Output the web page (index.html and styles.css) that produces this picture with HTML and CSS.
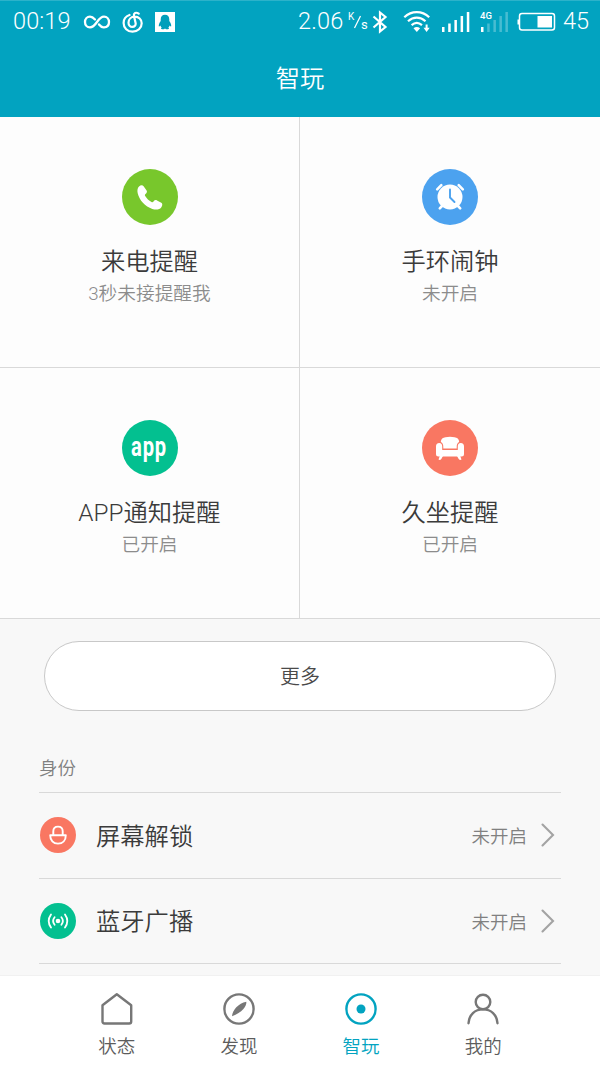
FILE: index.html
```html
<!DOCTYPE html>
<html lang="zh-CN">
<head>
<meta charset="utf-8">
<title>智玩</title>
<link rel="stylesheet" href="styles.css">
</head>
<body>
<div class="screen">
  <header class="header">
    <div class="status">
      <span class="time">00:19</span>
      <svg class="infinity" width="28" height="16" viewBox="0 0 28 16" fill="none" stroke="#fff" stroke-width="2.3" stroke-linecap="round"><path d="M16 10.500C18 13 19.500 13.600 21 13.400C24 13.200 26 11 26 8C26 5 24 2.600 21 2.600C14.500 2.600 13.500 13.400 7 13.400C4 13.400 2 11 2 8C2 5 4 2.600 7 2.600C9 2.600 10.500 3.800 12 5.500"/></svg>
      <svg class="music" width="22" height="22" viewBox="0 0 22 22" fill="none" stroke="#fff" stroke-width="2.200" stroke-linecap="round"><path d="M7.500 4C4 5.200 1.600 8.300 1.600 12C1.600 16.900 5.500 20.700 10.500 20.700C15.700 20.700 19.700 17 19.700 12.200C19.700 8.300 16.600 5.700 12.800 5.700C9 5.700 6.500 8.400 6.500 11.700C6.500 14.200 8.200 15.900 10.300 15.900C12.600 15.900 14 14.200 13.600 12L12 5C11.400 1.900 14 .8 16.700 2.700"/></svg>
      <svg class="penguin" width="20" height="20" viewBox="0 0 20 20"><rect width="20" height="20" fill="#fff"/><path fill="#009fbb" d="M10 2.800C7.200 2.800 5.700 4.700 5.700 7.500V9C4.200 11 3.500 13 3.900 14.500C4.500 14.500 5 14 5.400 13.500C5.700 14.600 6.200 15.200 6.700 15.700C5.500 16.200 5.900 17.200 7.200 17.200H9L10 16.600L11 17.200H12.800C14.100 17.200 14.500 16.200 13.300 15.700C13.900 15.200 14.300 14.600 14.600 13.500C15 14 15.500 14.500 16.100 14.500C16.500 13 15.800 11 14.300 9V7.500C14.300 4.700 12.800 2.800 10 2.800Z"/></svg>
      <span class="speed">2.06</span>
      <span class="unit"><span class="unit-k">K</span><svg width="9" height="14" viewBox="0 0 9 14"><path d="M1.500 13L7.500 1" stroke="#fff" stroke-width="1.200"/></svg><span class="unit-s">s</span></span>
      <svg class="bluetooth" width="16" height="24" viewBox="0 0 16 24" fill="none" stroke="#fff" stroke-width="2.200"><path d="M1.500 6.500L13.500 17L8 21.500V2.500L13.500 7L1.500 17.500"/></svg>
      <svg class="wifi" width="28" height="24" viewBox="0 0 28 24" fill="none" stroke="#fff" stroke-width="2.200"><path d="M1.300 7.200C8.500 .3 19 .3 26.200 7.200M5 11.300C10.300 6.500 17.200 6.500 22.500 11.300M8.600 15.200C12 12.300 15.600 12.300 19 15.200"/><path d="M10.500 18.200Q13.800 15.900 17.100 18.200L13.800 22Z" fill="#fff" stroke="none"/><path d="M23.600 14.500V20" stroke-width="2"/><path d="M20.500 17.700H26.700L23.600 22Z" fill="#fff" stroke="none"/></svg>
      <svg class="signal" width="28" height="22" viewBox="0 0 28 22" fill="#fff"><path d="M0 16h2.500v5H0zM6.200 12.500h2.500V21H6.200zM12.400 9h2.500v12h-2.500zM18.600 5h2.500v16h-2.500zM24.800 1h2.500v20h-2.500z"/></svg>
      <span class="mobile"><span class="network">4G</span><svg width="28" height="22" viewBox="0 0 28 22" fill="#fff"><path d="M1 16h2.500v5H1z"/><path opacity=".28" d="M7.200 12.500h2.500V21H7.200zM13.400 9h2.500v12h-2.500zM19.400 5h2.500v16h-2.500zM25.400 1h2.500v20h-2.500z"/></svg></span>
      <svg class="battery" width="39" height="20" viewBox="0 0 39 20"><rect x="2.500" y="1.500" width="35" height="16.500" rx="2.500" fill="none" stroke="#fff" stroke-width="1.500"/><path fill="#fff" d="M.5 7.500h2v5H.5zM20.500 4h14.500v11.500H20.500z"/></svg>
      <span class="percent">45</span>
    </div>
    <h1 class="title">智玩</h1>
  </header>

  <main class="content">
    <section class="features">
      <div class="feature">
        <svg class="badge" viewBox="0 0 56 56"><circle cx="28" cy="28" r="28" fill="#78c72c"/><path fill="#fff" d="M17 17.500C18.500 15.800 20.600 15.700 21.600 17.200L24.600 21.600C25.400 23 24.800 24 23.500 25C22.800 25.600 22.700 26.200 23.200 27.100C24.800 29.700 26.800 31.700 29.500 33C30.400 33.400 31 33.200 31.500 32.500C32.500 31.200 33.600 30.700 35 31.400L39.300 33.800C40.700 34.700 40.600 36.700 39.200 38.500C37.500 40.800 33.800 41 30.300 39.900C23.200 37.500 17.300 31.200 15.700 24.200C15.100 21.500 15.400 19 17 17.500Z"/></svg>
        <h2>来电提醒</h2><p>3秒未接提醒我</p>
      </div>
      <div class="feature">
        <svg class="badge" viewBox="0 0 56 56"><circle cx="28" cy="28" r="28" fill="#4ca2ef"/><circle cx="28" cy="28" r="12.500" fill="#fff"/><g fill="none" stroke="#fff" stroke-width="2.600" stroke-linecap="round"><path d="M15.200 20.300L19.300 16.200M36.700 16.200L40.800 20.300M20 37L17.800 39.300M36 37L38.200 39.300"/><path stroke="#4ca2ef" stroke-width="1.900" d="M28 20.500V28.500L32.500 33"/></g></svg>
        <h2>手环闹钟</h2><p>未开启</p>
      </div>
      <div class="feature">
        <span class="badge app-badge"><span>app</span></span>
        <h2>APP通知提醒</h2><p>已开启</p>
      </div>
      <div class="feature">
        <svg class="badge" viewBox="0 0 56 56"><circle cx="28" cy="28" r="28" fill="#f97762"/><g fill="#fff"><path d="M18.800 22C19 18.800 20.800 17.600 23.500 17.200Q28 16.500 32.500 17.200C35.200 17.600 37 18.800 37.200 22C35.300 23 34.700 24.500 34.700 27V28.500H21.300V27C21.300 24.500 20.700 23 18.800 22Z"/><path d="M17.300 23C19.300 23 20.200 24.400 20.200 26.500V30H35.800V26.500C35.800 24.400 36.700 23 38.700 23C41 23 42 24.500 42 26.500V34Q42 36.500 39.500 36.500H16.500Q14 36.500 14 34V26.500C14 24.500 15 23 17.300 23Z"/><path d="M17.800 36H21L19.300 39Q18 40.500 16.500 39.500ZM35 36H38.200L39.500 39.500Q38 40.500 36.700 39Z"/></g></svg>
        <h2>久坐提醒</h2><p>已开启</p>
      </div>
    </section>

    <div class="more">更多</div>

    <section class="identity">
      <h3>身份</h3>
      <div class="row">
        <svg class="row-icon" viewBox="0 0 36 36"><circle cx="18" cy="18" r="18" fill="#f97762"/><path d="M10.200 18.200H25.800C25.800 23.500 22.700 26.600 18 26.600S10.200 23.500 10.200 18.200ZM13.300 18V14.300C13.300 11.300 15 9.600 18 9.600S22.700 11.300 22.700 14.300V18" fill="none" stroke="#fff" stroke-width="1.900" stroke-linejoin="round"/></svg>
        <span class="row-name">屏幕解锁</span><span class="row-state">未开启</span>
        <svg class="chevron" width="14" height="24" viewBox="0 0 14 24"><path d="M1.500 1.500L12 12L1.500 22.500" fill="none" stroke="#a3a3a3" stroke-width="2.100" stroke-linecap="round"/></svg>
      </div>
      <div class="row">
        <svg class="row-icon" viewBox="0 0 36 36"><circle cx="18" cy="18" r="18" fill="#03c090"/><circle cx="18" cy="18" r="2.300" fill="#fff"/><path d="M14.600 14.200Q11.600 18 14.600 21.800M21.400 14.200Q24.400 18 21.400 21.800M11 11.500Q6.400 18 11 24.500M25 11.500Q29.600 18 25 24.500" fill="none" stroke="#fff" stroke-width="1.800" stroke-linecap="round"/></svg>
        <span class="row-name">蓝牙广播</span><span class="row-state">未开启</span>
        <svg class="chevron" width="14" height="24" viewBox="0 0 14 24"><path d="M1.500 1.500L12 12L1.500 22.500" fill="none" stroke="#a3a3a3" stroke-width="2.100" stroke-linecap="round"/></svg>
      </div>
    </section>
  </main>

  <nav class="tabs">
    <div class="tab"><svg viewBox="0 0 34 34"><path d="M2.500 13.300L16.800 2.200L31.200 13.300V29.500Q31.200 31.500 29.200 31.500H4.500Q2.500 31.500 2.500 29.500Z"/></svg><span>状态</span></div>
    <div class="tab"><svg viewBox="0 0 34 34"><circle cx="17" cy="17" r="14.600"/><path class="solid" d="M24.300 9.700C25 14 20 20.500 10 24.300C10.200 18.500 16.500 11 24.300 9.700Z"/></svg><span>发现</span></div>
    <div class="tab active"><svg viewBox="0 0 34 34"><circle cx="17" cy="17" r="14.600"/><circle class="solid" cx="17" cy="17" r="4.500"/></svg><span>智玩</span></div>
    <div class="tab"><svg viewBox="0 0 34 34"><circle cx="17" cy="10" r="7.300"/><path stroke-linecap="round" d="M2.500 31.300C3 22.500 9 17.400 17 17.400S31 22.500 31.500 31.300"/></svg><span>我的</span></div>
  </nav>
</div>
</body>
</html>
```

FILE: styles.css
```css
* { box-sizing: border-box; }
body { margin: 0; }
h1, h2, h3, p { margin: 0; font-weight: 350; }
svg { display: block; flex: none; }

.screen {
  width: 600px;
  height: 1066px;
  display: flex;
  flex-direction: column;
  overflow: hidden;
  background: #f8f8f8;
  font-family: Roboto, "Noto Sans CJK SC", sans-serif;
  font-weight: 350;
}

.header { height: 117px; flex: none; background: #02a3c0; color: #fff; border-top: 1px solid #2cb2ca; }
.status { height: 41px; display: flex; align-items: center; padding-left: 13px; white-space: nowrap; }
.time, .speed, .percent { font-size: 23.500px; line-height: 38px; padding-bottom: 2px; font-weight: 350; }
.time { width: 70px; letter-spacing: .1px; }
.music { margin-left: 11px; }
.penguin { margin-left: 11px; }
.speed { width: 50px; margin-left: 123px; letter-spacing: .2px; }
.unit { width: 18px; height: 20px; display: flex; align-items: center; font-size: 10px; line-height: 10px; font-weight: 400; }
.unit-k { align-self: flex-start; width: 6px; }
.unit svg { margin: 0 -1px; }
.unit-s { align-self: flex-end; font-size: 13px; line-height: 15px; }
.bluetooth { margin-left: 6px; }
.wifi { margin-left: 15px; }
.signal { margin-left: 11px; }
.mobile { display: grid; margin-left: 10px; }
.mobile > * { grid-area: 1 / 1; }
.network { font-size: 9.500px; line-height: 9px; font-weight: 500; }
.battery { margin-left: 9px; }
.percent { margin-left: 7px; }
.title { text-align: center; font-size: 24.300px; line-height: 36px; margin-top: 19px; }

.content { flex: 1; min-height: 0; overflow: hidden; }
.features { display: grid; grid-template-columns: 300px 300px; grid-template-rows: 251px 251px; background: #fdfdfd; }
.feature { display: flex; flex-direction: column; align-items: center; padding-top: 52px; border-bottom: 1px solid #d9d9d9; }
.feature:nth-child(odd) { border-right: 1px solid #d9d9d9; }
.badge { width: 56px; height: 56px; }
.app-badge { display: flex; justify-content: center; border-radius: 50%; background: #03c090; color: #fff; font: 700 28px/53px Roboto, sans-serif; letter-spacing: 1.200px; }
.app-badge span { transform: scaleX(.72); }
.feature h2 { margin-top: 19px; font-size: 24.300px; line-height: 36px; color: #3b3b3b; white-space: nowrap; }
.feature p { font-size: 18.700px; line-height: 28px; color: #8c8c8c; }

.more { width: 512px; height: 70px; margin: 22px auto 0; border: 1px solid #c8c8c8; border-radius: 35px; background: #fff; color: #4a4a4a; font-size: 20px; line-height: 70px; text-align: center; }

.identity { margin: 41px 39px 0; }
.identity h3 { height: 41px; border-bottom: 1px solid #d9d9d9; font-size: 18.500px; line-height: 34px; color: #808080; }
.row { height: 85.500px; display: flex; align-items: center; border-bottom: 1px solid #d9d9d9; }
.row-icon { width: 36px; height: 36px; margin-left: 1px; }
.row-name { margin-left: 20px; padding-bottom: 2px; font-size: 24.300px; color: #3b3b3b; }
.row-state { margin-left: auto; font-size: 18.500px; color: #808080; }
.chevron { margin: 0 6px 0 14px; }

.tabs { height: 91px; flex: none; display: flex; justify-content: center; border-top: 1px solid #f1f1f1; background: #fff; color: #5c5c5c; }
.tab { width: 122.200px; display: flex; flex-direction: column; align-items: center; padding-top: 16px; font-size: 18.500px; line-height: 28px; }
.tab svg { width: 34px; height: 34px; fill: none; stroke: #777; stroke-width: 2.400; stroke-linejoin: round; }
.tab span { margin-top: 7px; }
.tab .solid { fill: #777; stroke: none; }
.tab.active { color: #02a3c0; }
.tab.active svg { stroke: #02a3c0; }
.tab.active .solid { fill: #02a3c0; }
```
